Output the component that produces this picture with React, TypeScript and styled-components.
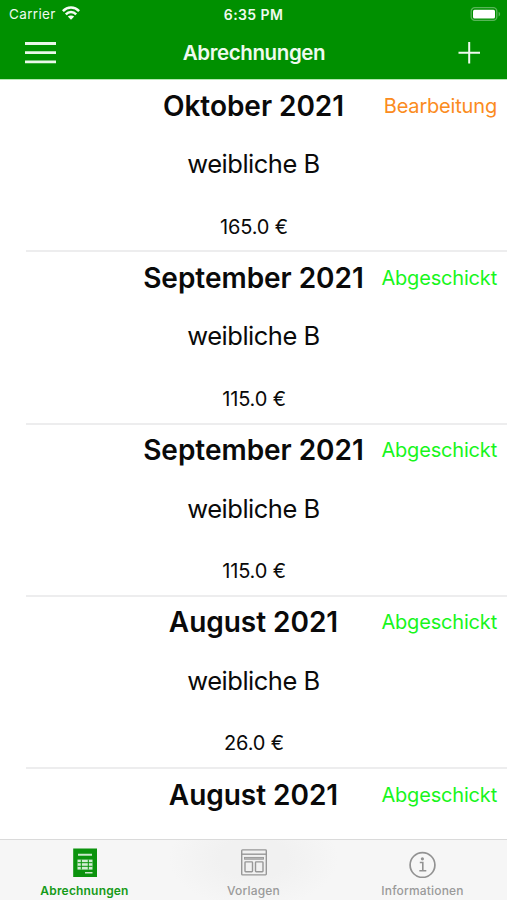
import React from 'react';
import styled, { createGlobalStyle } from 'styled-components';

const GlobalStyle = createGlobalStyle`
  * { box-sizing: border-box; }
  body { margin: 0; background: #fff; }
`;

const Screen = styled.div`
  width: 507px;
  height: 900px;
  display: flex;
  flex-direction: column;
  overflow: hidden;
  background: #fff;
  color: #0a0a0a;
  font-family: Inter, Roboto, sans-serif;
`;

const Header = styled.header`
  flex: none;
  height: 79px;
  background: #009000;
  color: #effaef;
`;

const StatusBar = styled.div`
  height: 27px;
  padding: 0 6px 0 9px;
  display: grid;
  grid-template-columns: 1fr auto 1fr;
  align-items: center;
  font-size: 13.5px;
  line-height: 27px;
`;

const Carrier = styled.div`
  display: flex;
  align-items: center;
  gap: 6px;
  letter-spacing: 0.35px;
  padding-top: 1px;

  svg { margin-top: -3px; }
`;

const Clock = styled.div`
  font-size: 14px;
  font-weight: 600;
  letter-spacing: 0.4px;
  margin-left: -3px;
`;

const BatteryIcon = styled.svg`
  justify-self: end;
`;

const NavBar = styled.div`
  height: 52px;
  padding: 0 26px 0 25px;
  display: grid;
  grid-template-columns: 1fr auto 1fr;
  align-items: center;
`;

const IconButton = styled.button<{ $end?: boolean }>`
  border: 0;
  padding: 0;
  background: none;
  color: inherit;
  display: flex;
  justify-self: ${p => (p.$end ? 'end' : 'start')};
`;

const NavTitle = styled.h1`
  margin: 0 0 0 2px;
  font-size: 20.5px;
  line-height: 26px;
  font-weight: 600;
  letter-spacing: -0.38px;
`;

const List = styled.main`
  flex: 1;
  min-height: 0;
  overflow: hidden;
  border-top: 1px solid #b4e8b2;
`;

const Row = styled.article`
  height: 172.3px;
  display: grid;
  grid-template-columns: 1fr auto 1fr;
  grid-template-rows: 51px 65px 55px;
  align-items: center;
  justify-items: center;
  background: linear-gradient(#ededee, #ededee) 26px 100% / 481px 2px no-repeat;
`;

const Month = styled.h2`
  grid-column: 2;
  margin: 0;
  font-size: 28px;
  line-height: 36px;
  font-weight: 600;
  letter-spacing: -0.03px;
  white-space: nowrap;
`;

const State = styled.span<{ $sent: boolean }>`
  grid-column: 3;
  justify-self: end;
  margin-right: 10px;
  font-size: 20px;
  letter-spacing: -0.18px;
  color: ${p => (p.$sent ? '#18f51c' : '#fb8b20')};
`;

const Team = styled.div`
  grid-column: 2;
  grid-row: 2;
  font-size: 25.5px;
  letter-spacing: -0.5px;
`;

const Amount = styled.div`
  grid-column: 2;
  grid-row: 3;
  padding: 6px 0 0 1px;
  font-size: 20px;
  letter-spacing: -0.15px;
`;

const TabBar = styled.nav`
  flex: none;
  height: 61px;
  border-top: 1.5px solid #dadada;
  background: radial-gradient(ellipse 85px 50px at 50% 30%, #f1f1f1 40%, #f6f6f6 100%);
  display: grid;
  grid-template-columns: repeat(3, 1fr);
`;

const Tab = styled.button<{ $active?: boolean }>`
  border: 0;
  padding: 8px 0 0;
  background: none;
  display: flex;
  flex-direction: column;
  align-items: center;
  gap: 5px;
  font: ${p => (p.$active ? 600 : 500)} 12px/16px Inter, sans-serif;
  letter-spacing: 0.18px;
  color: ${p => (p.$active ? '#159a18' : '#9a9a9a')};
`;

interface Entry {
  month: string;
  sent: boolean;
  team?: string;
  amount?: string;
}

const entries: Entry[] = [
  { month: 'Oktober 2021', team: 'weibliche B', amount: '165.0 €', sent: false },
  { month: 'September 2021', team: 'weibliche B', amount: '115.0 €', sent: true },
  { month: 'September 2021', team: 'weibliche B', amount: '115.0 €', sent: true },
  { month: 'August 2021', team: 'weibliche B', amount: '26.0 €', sent: true },
  { month: 'August 2021', sent: true },
];

const Wifi = () => (
  <svg width="18" height="14" viewBox="0 0 18 14" fill="none" stroke="#f4fcf4" strokeWidth="2.5">
    <path d="M.9 5.1C5.5.4 12.5.4 17.1 5.1" />
    <path d="M3.8 8.3C6.8 5.3 11.2 5.3 14.2 8.3" />
    <path d="M9 13.8L5.8 10.600C7.6 9 10.4 9 12.2 10.600Z" fill="#f4fcf4" stroke="none" />
  </svg>
);

const Battery = () => (
  <BatteryIcon width="31" height="15" viewBox="0 0 31 15">
    <rect x="1.200" y=".7" width="25.600" height="12.600" rx="3.6" fill="none" stroke="#58b558" strokeWidth="1.3" />
    <rect x="3" y="2.700" width="22" height="8.800" rx="1.5" fill="#fff" />
    <path d="M28.6 4.800c2 .8 2 3.8 0 4.6z" fill="#58b558" />
  </BatteryIcon>
);

const SheetIcon = () => (
  <svg width="24" height="30" viewBox="0 0 24 30">
    <path d="M.2.5h23.800v28.500H.2z" fill="#0b930d" />
    <path d="M5 5.800h14v2H5zM12 24h7.500v1.600H12z" fill="#c9e8ca" />
    <path d="M4.500 11.600h15v10h-15z" fill="#d3edd4" />
    <path d="M4.500 14.700h15M4.500 18.300h15M8.300 11.600v10M15.300 11.600v10" stroke="#0b930d" strokeWidth="1" />
  </svg>
);

const TemplateIcon = () => (
  <svg width="26" height="30" viewBox="0 0 26 30" fill="none" stroke="#979797" strokeWidth="1.400">
    <rect x=".7" y="1.900" width="24.600" height="25" rx=".8" />
    <path d="M.7 6.200h24.600" />
    <rect x="3.500" y="9.400" width="19" height="1.800" fill="#bbb" strokeWidth=".9" />
    <rect x="4" y="13.900" width="7.500" height="9.800" rx=".7" />
    <rect x="14.500" y="13.900" width="7.500" height="9.800" rx=".7" />
  </svg>
);

const InfoIcon = () => (
  <svg width="28" height="30" viewBox="0 0 28 30" fill="none" stroke="#929292" strokeWidth="1.700">
    <circle cx="13.500" cy="17" r="12.400" />
    <path d="M10.800 14.500h3v8.300M10.300 22.800h7" strokeWidth="1.600" />
    <circle cx="13.400" cy="10.800" r="1.600" fill="#929292" stroke="none" />
  </svg>
);

export default function App() {
  return (
    <Screen>
      <GlobalStyle />
      <Header>
        <StatusBar>
          <Carrier>Carrier <Wifi /></Carrier>
          <Clock>6:35 PM</Clock>
          <Battery />
        </StatusBar>
        <NavBar>
          <IconButton aria-label="Menü">
            <svg width="31" height="24" viewBox="0 0 31 24" stroke="#e9f8e9" strokeWidth="2.800">
              <path d="M0 2.500h31M0 11.700h31M0 20.800h31" />
            </svg>
          </IconButton>
          <NavTitle>Abrechnungen</NavTitle>
          <IconButton $end aria-label="Neu">
            <svg width="23" height="22" viewBox="0 0 23 22" stroke="#effaef" strokeWidth="2">
              <path d="M.5 10.700h21.500M11.200 0v21.500" />
            </svg>
          </IconButton>
        </NavBar>
      </Header>
      <List>
        {entries.map((entry, index) => (
          <Row key={index}>
            <Month>{entry.month}</Month>
            <State $sent={entry.sent}>{entry.sent ? 'Abgeschickt' : 'Bearbeitung'}</State>
            {entry.team && <Team>{entry.team}</Team>}
            {entry.amount && <Amount>{entry.amount}</Amount>}
          </Row>
        ))}
      </List>
      <TabBar>
        <Tab $active><SheetIcon />Abrechnungen</Tab>
        <Tab><TemplateIcon />Vorlagen</Tab>
        <Tab><InfoIcon />Informationen</Tab>
      </TabBar>
    </Screen>
  );
}
